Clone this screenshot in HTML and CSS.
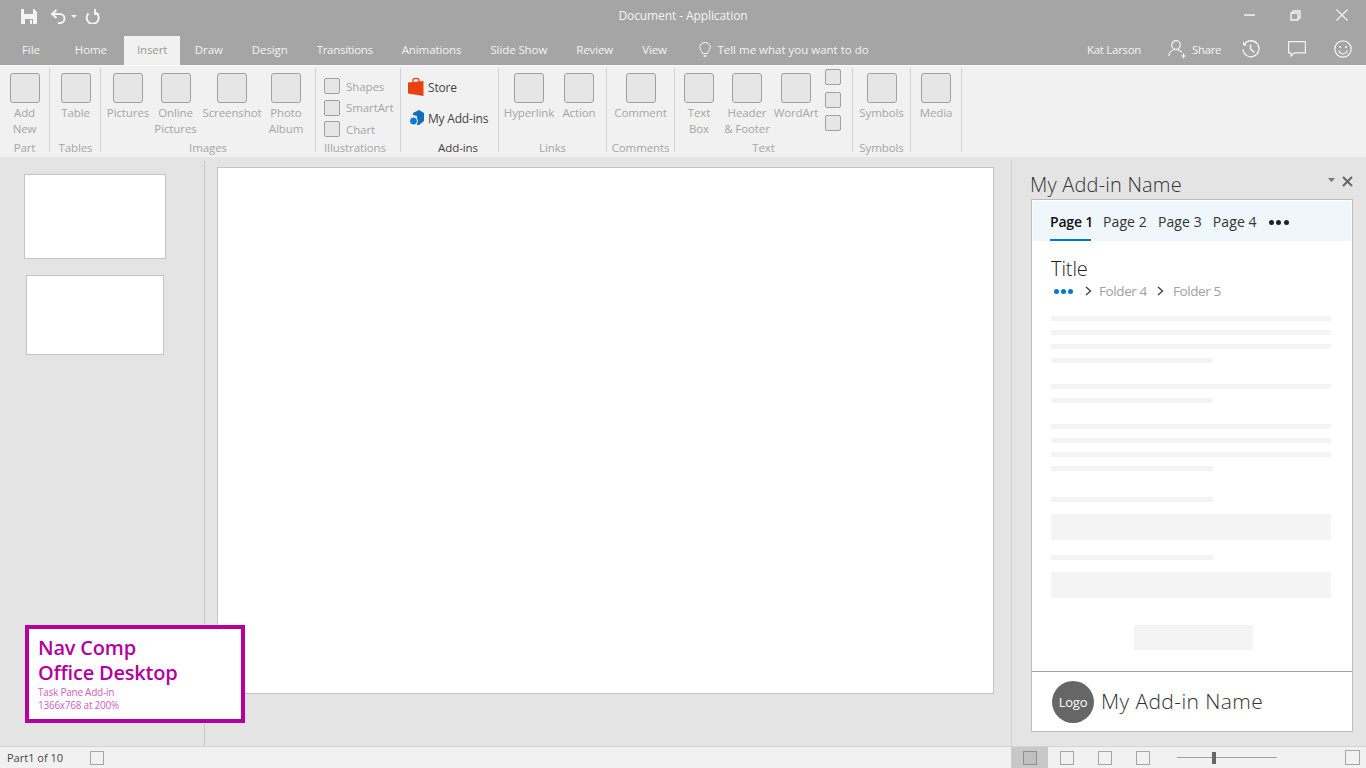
FILE: index.html
```html
<!DOCTYPE html>
<html lang="en">
<head>
    <meta charset="UTF-8">
    <meta name="viewport" content="width=device-width, initial-scale=1.0">
    <title>Document - Application</title>
    <link rel="stylesheet" href="styles.css">
</head>
<body>
    <div class="app">
        <header class="titlebar">
            <div class="title-row">
                <div class="quick">
                    <svg class="ic-save" width="16" height="15" viewBox="0 0 16 15"><path d="M0 0h13l3 3v12H0z" fill="#f4f4f4"/><path d="M3 0h9v5H3z" fill="#a5a5a5"/><path d="M4 10h8v5H4z" fill="#a5a5a5"/><path d="M9 11h2v4H9z" fill="#f4f4f4"/></svg>
                    <svg class="ic-undo" width="16" height="15" viewBox="0 0 16 15" fill="none" stroke="#f4f4f4" stroke-width="2"><path d="M6.500 1 2 5l4.500 4"/><path d="M2 5h8a4.500 4.500 0 0 1 0 9H8"/></svg>
                    <svg class="ic-caret" width="6" height="3" viewBox="0 0 6 3"><path d="M0 0h6L3 3z" fill="#f4f4f4"/></svg>
                    <svg class="ic-redo" width="15" height="15" viewBox="0 0 15 15" fill="none" stroke="#f4f4f4" stroke-width="2"><path d="M9 3a6 6 0 1 1-5.500 1.500"/><path d="M10 0v5H14" stroke-width="1.800"/></svg>
                </div>
                <div class="doc-title">Document - Application</div>
                <div class="win-controls">
                    <svg width="11" height="2" viewBox="0 0 11 2"><path d="M0 1h11" stroke="#f4f4f4" stroke-width="1.500"/></svg>
                    <svg width="11" height="11" viewBox="0 0 11 11" fill="none" stroke="#f4f4f4" stroke-width="1.300"><path d="M1 3h7v7H1z"/><path d="M3 3V1h7v7H8"/></svg>
                    <svg width="12" height="12" viewBox="0 0 12 12"><path d="M.5.500l11 11M11.500.500l-11 11" stroke="#f4f4f4" stroke-width="1.200"/></svg>
                </div>
            </div>
            <nav class="tab-row">
                <span class="tab tab-file">File</span>
                <span class="tab">Home</span>
                <span class="tab active">Insert</span>
                <span class="tab">Draw</span>
                <span class="tab">Design</span>
                <span class="tab tab-narrow">Transitions</span>
                <span class="tab">Animations</span>
                <span class="tab">Slide Show</span>
                <span class="tab">Review</span>
                <span class="tab">View</span>
                <span class="tell-me">
                    <svg width="12" height="16" viewBox="0 0 12 16" fill="none" stroke="#f4f4f4"><path d="M3.500 11.500C3 9 .7 7.800.7 5.200a5.300 4.700 0 0 1 10.600 0C11.300 7.800 9 9 8.500 11.500z"/><path d="M4.500 14h3" stroke-width="1.500"/></svg>
                    Tell me what you want to do
                </span>
                <div class="account">
                    <span class="user">Kat Larson</span>
                    <svg class="ic-person" width="19" height="19" viewBox="0 0 19 19" fill="none" stroke="#f4f4f4" stroke-width="1.200"><circle cx="8" cy="5" r="4.300"/><path d="M.7 16c.6-4 3.300-6.500 7.300-6.500 2.500 0 4.500 1 5.800 3"/><path d="M15.500 13.500v5M13 16h5"/></svg>
                    <span class="share">Share</span>
                    <svg class="ic-history" width="18" height="18" viewBox="0 0 18 18" fill="none" stroke="#f4f4f4" stroke-width="1.300"><path d="M2.400 4.200a8 8 0 1 1-1.400 5"/><path d="M1 1.500v4h4" fill="#f4f4f4" stroke="none"/><path d="M8.500 4.500V9l4 3.500" stroke-width="1.500"/></svg>
                    <svg class="ic-comment" width="18" height="16" viewBox="0 0 18 16" fill="none" stroke="#f4f4f4" stroke-width="1.200"><path d="M.6.600h16.800v11.300H6.500L3 15.200v-3.300H.6z"/></svg>
                    <svg class="ic-smile" width="18" height="18" viewBox="0 0 18 18" fill="none" stroke="#f4f4f4" stroke-width="1.200"><circle cx="9" cy="9" r="8.200"/><circle cx="6" cy="7" r="1.100" fill="#f4f4f4" stroke="none"/><circle cx="12" cy="7" r="1.100" fill="#f4f4f4" stroke="none"/><path d="M4.800 10.800c1 2 2.500 3 4.200 3s3.200-1 4.200-3"/></svg>
                </div>
            </nav>
        </header>

        <section class="ribbon">
            <div class="group g-part">
                <div class="items">
                    <div class="rb w-full"><span class="box"></span><span class="rb-label">Add<br>New</span></div>
                </div>
                <div class="group-label">Part</div>
            </div>
            <div class="group g-tables">
                <div class="items">
                    <div class="rb w-full"><span class="box"></span><span class="rb-label">Table</span></div>
                </div>
                <div class="group-label">Tables</div>
            </div>
            <div class="group g-images">
                <div class="items">
                    <div class="rb w-48"><span class="box"></span><span class="rb-label">Pictures</span></div>
                    <div class="rb w-47"><span class="box"></span><span class="rb-label">Online<br>Pictures</span></div>
                    <div class="rb w-66"><span class="box"></span><span class="rb-label">Screenshot</span></div>
                    <div class="rb w-42"><span class="box"></span><span class="rb-label">Photo<br>Album</span></div>
                </div>
                <div class="group-label">Images</div>
            </div>
            <div class="group g-illus">
                <div class="items column">
                    <div class="mini"><span class="box small"></span>Shapes</div>
                    <div class="mini"><span class="box small"></span>SmartArt</div>
                    <div class="mini"><span class="box small"></span>Chart</div>
                </div>
                <div class="group-label">Illustrations</div>
            </div>
            <div class="group g-addins">
                <div class="items column">
                    <div class="addin">
                        <svg width="16" height="18" viewBox="0 0 16 18"><path d="M0 4.500 15.500 3v15L0 15.500z" fill="#e8400f"/><path d="M5 5V2a2 2 0 0 1 2-1.500h2A2 2 0 0 1 11 2v3" fill="none" stroke="#e8400f" stroke-width="1.300"/></svg>
                        Store
                    </div>
                    <div class="addin">
                        <svg width="16" height="16" viewBox="0 0 16 16"><path d="M4 3 10 0l5 3v8l-5 4H8V6L4 5z" fill="#106ebe"/><circle cx="4.500" cy="11" r="4" fill="#0f78d4" stroke="#f1f1f1"/></svg>
                        My Add-ins
                    </div>
                </div>
                <div class="group-label dark">Add-ins</div>
            </div>
            <div class="group g-links">
                <div class="items">
                    <div class="rb w-60"><span class="box"></span><span class="rb-label">Hyperlink</span></div>
                    <div class="rb w-40"><span class="box"></span><span class="rb-label">Action</span></div>
                </div>
                <div class="group-label">Links</div>
            </div>
            <div class="group g-comments">
                <div class="items">
                    <div class="rb w-full"><span class="box"></span><span class="rb-label">Comment</span></div>
                </div>
                <div class="group-label">Comments</div>
            </div>
            <div class="group g-text">
                <div class="items">
                    <div class="rb w-48"><span class="box"></span><span class="rb-label">Text<br>Box</span></div>
                    <div class="rb w-48"><span class="box"></span><span class="rb-label">Header<br>&amp; Footer</span></div>
                    <div class="rb w-50"><span class="box"></span><span class="rb-label">WordArt</span></div>
                    <div class="mini-col">
                        <span class="box small"></span>
                        <span class="box small"></span>
                        <span class="box small"></span>
                    </div>
                </div>
                <div class="group-label">Text</div>
            </div>
            <div class="group g-symbols">
                <div class="items">
                    <div class="rb w-full"><span class="box"></span><span class="rb-label">Symbols</span></div>
                </div>
                <div class="group-label">Symbols</div>
            </div>
            <div class="group g-media">
                <div class="items">
                    <div class="rb w-full"><span class="box"></span><span class="rb-label">Media</span></div>
                </div>
                <div class="group-label"></div>
            </div>
        </section>

        <main class="workspace">
            <aside class="thumbs">
                <div class="thumb first"></div>
                <div class="thumb second"></div>
            </aside>
            <div class="stage">
                <div class="slide"></div>
            </div>
            <aside class="pane">
                <div class="pane-head">
                    <span class="pane-title">My Add-in Name</span>
                    <svg class="pane-caret" width="7" height="4" viewBox="0 0 7 4"><path d="M0 0h7L3.500 4z" fill="#777"/></svg>
                    <svg class="pane-close" width="11" height="11" viewBox="0 0 11 11"><path d="M1 1l9 9M10 1l-9 9" stroke="#666" stroke-width="2"/></svg>
                </div>
                <div class="addin-frame">
                    <div class="page-tabs">
                        <span class="page-tab current">Page 1</span>
                        <span class="page-tab">Page 2</span>
                        <span class="page-tab">Page 3</span>
                        <span class="page-tab">Page 4</span>
                        <span class="dots"><i></i><i></i><i></i></span>
                    </div>
                    <div class="addin-body">
                        <h1 class="addin-title">Title</h1>
                        <div class="crumbs">
                            <span class="dots blue"><i></i><i></i><i></i></span>
                            <svg class="chev first-chev" width="7" height="10" viewBox="0 0 7 10" fill="none"><path d="M1 1l4.500 4L1 9" stroke="#444" stroke-width="1.400"/></svg>
                            <span class="crumb">Folder 4</span>
                            <svg class="chev" width="7" height="10" viewBox="0 0 7 10" fill="none"><path d="M1 1l4.500 4L1 9" stroke="#444" stroke-width="1.400"/></svg>
                            <span class="crumb">Folder 5</span>
                        </div>
                        <div class="para">
                            <div class="line"></div><div class="line"></div><div class="line"></div><div class="line short"></div>
                        </div>
                        <div class="para">
                            <div class="line"></div><div class="line short"></div>
                        </div>
                        <div class="para">
                            <div class="line"></div><div class="line"></div><div class="line"></div><div class="line short"></div>
                        </div>
                        <div class="field first-field"><div class="line short"></div><div class="input"></div></div>
                        <div class="field"><div class="line short"></div><div class="input"></div></div>
                        <div class="fake-button"></div>
                    </div>
                    <div class="addin-footer">
                        <span class="logo">Logo</span>
                        <span class="footer-name">My Add-in Name</span>
                    </div>
                </div>
            </aside>
        </main>

        <footer class="statusbar">
            <span class="part">Part1 of 10</span>
            <span class="s-box part-box"></span>
            <div class="views">
                <span class="view on"><span class="s-box"></span></span>
                <span class="view"><span class="s-box"></span></span>
                <span class="view"><span class="s-box"></span></span>
                <span class="view"><span class="s-box"></span></span>
            </div>
            <div class="zoom"><span class="thumb-mark"></span></div>
            <span class="s-box fit"></span>
        </footer>

        <div class="note">
            <div class="note-title">Nav Comp<br>Office Desktop</div>
            <div class="note-sub">Task Pane Add-in<br>1366x768 at 200%</div>
        </div>
    </div>
</body>
</html>
```

FILE: styles.css
```css
* {
    box-sizing: border-box;
}
body {
    margin: 0;
    font-family: "Open Sans", "Noto Sans", sans-serif;
    font-size: 12px;
    color: #444;
    background-color: #e4e4e4;
    overflow: hidden;
}
.app {
    position: relative;
    width: 1366px;
    height: 768px;
    display: flex;
    flex-direction: column;
}

/* title bar */
.titlebar {
    height: 65px;
    background-color: #a5a5a5;
    color: #f4f4f4;
}
.title-row {
    height: 36px;
    display: grid;
    grid-template-columns: 1fr auto 1fr;
    align-items: center;
    letter-spacing: -0.1px;
}
.quick {
    display: flex;
    align-items: center;
    padding: 0 0 3px 21px;
}
.ic-undo {
    margin-left: 13px;
}
.ic-caret {
    margin-left: 5px;
}
.ic-redo {
    margin-left: 8px;
}
.doc-title {
    padding-bottom: 6px;
}
.win-controls {
    display: flex;
    justify-content: flex-end;
    align-items: center;
    gap: 35px;
    padding: 0 18px 6px 0;
}
.tab-row {
    height: 29px;
    display: flex;
    font-size: 11.5px;
    letter-spacing: -0.1px;
}
.tab {
    height: 29px;
    line-height: 28px;
    padding: 0 14.5px;
    white-space: nowrap;
}
.tab-file {
    padding-left: 22px;
    padding-right: 20.500px;
}
.tab-narrow {
    letter-spacing: -0.3px;
}
.tab.active {
    background-color: #f1f1f1;
    color: #9a9a9a;
    padding: 0 13px;
    margin: 0 0 0 2.500px;
}
.tell-me {
    display: flex;
    align-items: center;
    gap: 6px;
    margin-left: 18px;
    padding-bottom: 2px;
    white-space: nowrap;
    letter-spacing: 0;
}
.account {
    margin-left: auto;
    display: flex;
    align-items: center;
    padding: 0 14px 3px 0;
}
.user {
    letter-spacing: -0.3px;
}
.ic-person {
    margin-left: 27px;
}
.share {
    margin-left: 5px;
    letter-spacing: -0.4px;
}
.ic-history {
    margin-left: 21px;
}
.ic-comment {
    margin-left: 28px;
}
.ic-smile {
    margin-left: 28px;
}

/* ribbon */
.ribbon {
    height: 92px;
    background-color: #f1f1f1;
    border-top: 1px solid #fafafa;
    padding: 2px 0 5px;
    display: flex;
    color: #a6a6a6;
    font-size: 11.5px;
    letter-spacing: -0.1px;
}
.group {
    display: flex;
    flex-direction: column;
    border-right: 1px solid #d4d4d4;
    padding-top: 5px;
}
.g-part { width: 50px; }
.g-tables { width: 51px; padding-left: 1px; }
.g-images { width: 215px; padding-left: 3px; }
.g-illus { width: 85px; padding-left: 8px; }
.g-addins { width: 98px; padding-left: 7px; }
.g-links { width: 108px; }
.g-comments { width: 68px; }
.g-text { width: 178px; }
.g-symbols { width: 58px; }
.g-media { width: 51px; }
.items {
    flex: 1;
    display: flex;
}
.items.column {
    flex-direction: column;
}
.group-label {
    height: 8px;
    line-height: 8px;
    text-align: center;
    white-space: nowrap;
}
.g-images .group-label {
    padding-right: 3px;
}
.g-illus .group-label {
    text-align: left;
}
.group-label.dark {
    color: #444;
    padding-left: 10px;
}
.rb {
    display: flex;
    flex-direction: column;
    align-items: center;
    white-space: nowrap;
    text-align: center;
}
.w-full { width: 100%; }
.w-40 { width: 40px; }
.w-42 { width: 42px; }
.w-47 { width: 47px; }
.w-48 { width: 48px; }
.w-50 { width: 50px; }
.w-60 { width: 60px; }
.w-66 { width: 66px; }
.box {
    display: block;
    flex: none;
    width: 30px;
    height: 30px;
    background-color: #e6e6e6;
    border: 1px solid #a0a0a0;
    border-radius: 3px;
}
.box.small {
    width: 16px;
    height: 16px;
    border-radius: 2px;
}
.rb-label {
    margin-top: 2px;
    line-height: 16px;
}
.mini {
    display: flex;
    align-items: center;
    gap: 6px;
    height: 16px;
    margin-top: 5.500px;
    white-space: nowrap;
}
.mini:first-child {
    margin-top: 5px;
}
.mini-col {
    display: flex;
    flex-direction: column;
    gap: 7px;
    margin: -4px 0 0 4px;
}
.addin {
    display: flex;
    align-items: center;
    gap: 4px;
    color: #444;
    font-size: 12px;
    letter-spacing: -0.2px;
    white-space: nowrap;
    height: 18px;
    margin-top: 5px;
}
.addin + .addin {
    margin-top: 13px;
    padding-left: 1px;
    gap: 3px;
}

/* main area */
.workspace {
    flex: 1;
    display: flex;
    min-height: 0;
}
.thumbs {
    width: 205px;
    margin-top: 4px;
    border-right: 1px solid #c8c8c8;
    display: flex;
    flex-direction: column;
    align-items: flex-start;
}
.thumb {
    background-color: #fff;
    border: 1px solid #c4c4c4;
}
.thumb.first {
    width: 142px;
    height: 85px;
    margin: 13px 0 0 24px;
}
.thumb.second {
    width: 138px;
    height: 80px;
    margin: 16px 0 0 26px;
}
.stage {
    width: 806px;
    padding: 10px 0 0 12px;
}
.slide {
    width: 777px;
    height: 527px;
    background-color: #fff;
    border: 1px solid #c4c4c4;
}

/* task pane */
.pane {
    flex: 1;
    margin-top: 3px;
    padding: 0 13px 14px 19px;
    border-left: 1px solid #d2d2d2;
    display: flex;
    flex-direction: column;
}
.pane-head {
    height: 39px;
    display: flex;
    align-items: flex-start;
}
.pane-title {
    margin: 12px 0 0 -1px;
    font-size: 20px;
    font-weight: 300;
    line-height: 26px;
    color: #333;
    letter-spacing: 0.2px;
    white-space: nowrap;
}
.pane-caret {
    margin: 18px 0 0 auto;
}
.pane-close {
    margin: 16px 0 0 7px;
}
.addin-frame {
    flex: 1;
    display: flex;
    flex-direction: column;
    width: 322px;
    background-color: #fff;
    border: 1px solid #bdbdbd;
    min-height: 0;
}
.page-tabs {
    height: 40px;
    margin: 1px 1px 0;
    background-color: #eff6fc;
    display: flex;
    padding-left: 17px;
    gap: 11px;
    font-size: 14px;
    letter-spacing: 0.1px;
    color: #333;
}
.page-tab {
    line-height: 42px;
    height: 40px;
    white-space: nowrap;
}
.page-tab.current {
    width: 41px;
    margin-right: 1px;
    color: #111;
    font-weight: 600;
    letter-spacing: -0.2px;
    border-bottom: 2px solid #0078d7;
}
.dots {
    display: flex;
    align-items: center;
    gap: 2.500px;
    margin-left: 1px;
    padding-top: 2px;
}
.dots i {
    display: block;
    width: 5px;
    height: 5px;
    border-radius: 50%;
    background-color: #222;
}
.dots.blue {
    margin: 0;
    padding-top: 0;
    gap: 2px;
}
.dots.blue i {
    background-color: #0078d7;
}
.addin-body {
    flex: 1;
    padding: 15px 21px 0 19px;
}
.addin-title {
    margin: 0;
    font-size: 20px;
    line-height: 25px;
    font-weight: 300;
    color: #222;
    letter-spacing: -0.1px;
}
.crumbs {
    height: 20px;
    display: flex;
    align-items: center;
    padding-left: 3px;
    font-size: 13.500px;
    letter-spacing: -0.4px;
    color: #a0a0a0;
}
.chev {
    margin: 0 9px 0 10px;
}
.chev.first-chev {
    margin: 0 7px 0 12px;
}
.crumb {
    white-space: nowrap;
}
.para {
    margin-top: 21px;
}
.crumbs + .para {
    margin-top: 15px;
}
.line {
    height: 5px;
    background-color: #f4f4f4;
    margin-bottom: 9px;
}
.line:last-child {
    margin-bottom: 0;
}
.line.short {
    width: 162px;
}
.field {
    margin-top: 15px;
}
.field.first-field {
    margin-top: 26px;
}
.field .line {
    margin-bottom: 12px;
}
.input {
    height: 26px;
    background-color: #f4f4f4;
}
.fake-button {
    width: 119px;
    height: 25px;
    margin: 27px 0 0 83px;
    background-color: #f4f4f4;
}
.addin-footer {
    height: 60px;
    border-top: 1px solid #a0a0a0;
    display: flex;
    align-items: center;
    padding-left: 20px;
}
.logo {
    width: 42px;
    height: 42px;
    border-radius: 50%;
    background-color: #666;
    color: #fff;
    font-size: 13px;
    line-height: 42px;
    text-align: center;
    letter-spacing: -0.2px;
}
.footer-name {
    margin-left: 7px;
    padding-bottom: 2px;
    font-size: 21px;
    font-weight: 300;
    color: #333;
    letter-spacing: 0.4px;
    white-space: nowrap;
}

/* status bar */
.statusbar {
    height: 22px;
    background-color: #f1f1f1;
    border-top: 1px solid #d4d4d4;
    display: flex;
    align-items: center;
    font-size: 11px;
}
.part {
    margin-left: 7px;
    width: 83px;
    white-space: nowrap;
}
.s-box {
    display: block;
    width: 14px;
    height: 14px;
    border: 1px solid #a6a6a6;
}
.views {
    display: flex;
    align-self: stretch;
    margin-left: 907px;
}
.view {
    width: 38px;
    display: flex;
    align-items: center;
    justify-content: center;
}
.view.on {
    width: 37px;
    background-color: #c8c8c8;
}
.view.on .s-box {
    background-color: #c0c0c0;
    border-color: #8f8f8f;
}
.zoom {
    position: relative;
    width: 100px;
    height: 1px;
    margin-left: 15px;
    background-color: #a0a0a0;
}
.thumb-mark {
    position: absolute;
    left: 35px;
    top: -5px;
    width: 4px;
    height: 12px;
    background-color: #666;
}
.fit {
    width: 15px;
    height: 15px;
    margin-left: 68px;
}

/* overlay card */
.note {
    position: absolute;
    left: 25px;
    top: 625px;
    width: 220px;
    height: 98px;
    background-color: #fff;
    border: 4px solid #b4009e;
    padding: 6px 0 0 9px;
}
.note-title {
    font-size: 20px;
    line-height: 25px;
    font-weight: 600;
    color: #b4009e;
    letter-spacing: -0.2px;
    white-space: nowrap;
}
.note-sub {
    margin-top: 1px;
    font-size: 10px;
    line-height: 13px;
    color: #d25cc6;
    letter-spacing: -0.25px;
    white-space: nowrap;
}
```
